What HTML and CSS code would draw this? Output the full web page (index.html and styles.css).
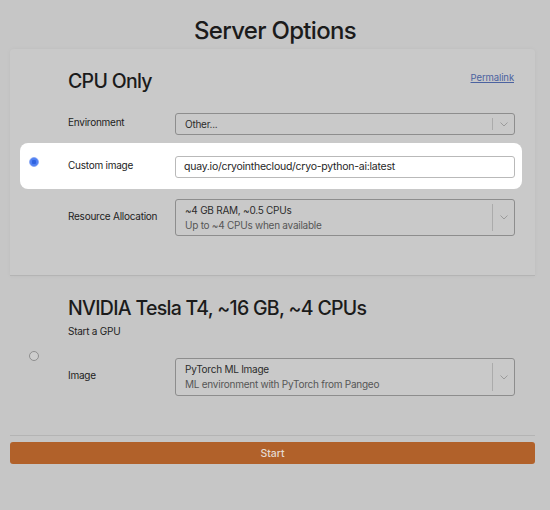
FILE: index.html
```html
<!DOCTYPE html>
<html>
<head>
<meta charset="utf-8">
<link rel="stylesheet" href="styles.css">
</head>
<body>
<h1 class="title">Server Options</h1>
<div class="options">
  <div class="option option-active">
    <div class="radio-col"><span class="radio radio-checked"></span></div>
    <div class="option-body">
      <div class="option-head">
        <h2 class="option-title">CPU Only</h2>
        <a class="permalink" href="#">Permalink</a>
      </div>
      <div class="rows">
        <div class="row">
          <span class="label">Environment</span>
          <div class="select">
            <div class="select-value"><span class="line-main">Other...</span></div>
            <span class="select-sep"></span>
            <span class="select-chev"><svg width="8" height="5" viewBox="0 0 8 5"><polyline points="0.5,0.5 4,4 7.5,0.5" fill="none" stroke="#9b9b9b" stroke-width="1"/></svg></span>
          </div>
        </div>
        <div class="row row-spot">
          <span class="spotlight"></span>
          <span class="label">Custom image</span>
          <div class="text-input">quay.io/cryointhecloud/cryo-python-ai:latest</div>
        </div>
        <div class="row">
          <span class="label">Resource Allocation</span>
          <div class="select select-tall">
            <div class="select-value">
              <span class="line-main">~4 GB RAM, ~0.5 CPUs</span>
              <span class="line-sub">Up to ~4 CPUs when available</span>
            </div>
            <span class="select-sep"></span>
            <span class="select-chev"><svg width="8" height="5" viewBox="0 0 8 5"><polyline points="0.5,0.5 4,4 7.5,0.5" fill="none" stroke="#9b9b9b" stroke-width="1"/></svg></span>
          </div>
        </div>
      </div>
    </div>
  </div>
  <div class="option">
    <div class="radio-col"><span class="radio"></span></div>
    <div class="option-body">
      <div class="option-head">
        <h2 class="option-title">NVIDIA Tesla T4, ~16 GB, ~4 CPUs</h2>
      </div>
      <p class="option-desc">Start a GPU</p>
      <div class="rows">
        <div class="row">
          <span class="label">Image</span>
          <div class="select select-tall select-tall2">
            <div class="select-value">
              <span class="line-main">PyTorch ML Image</span>
              <span class="line-sub">ML environment with PyTorch from Pangeo</span>
            </div>
            <span class="select-sep"></span>
            <span class="select-chev"><svg width="8" height="5" viewBox="0 0 8 5"><polyline points="0.5,0.5 4,4 7.5,0.5" fill="none" stroke="#9b9b9b" stroke-width="1"/></svg></span>
          </div>
        </div>
      </div>
    </div>
  </div>
  <button class="start-btn">Start</button>
</div>
</body>
</html>
```
FILE: styles.css
```css
* { box-sizing: border-box; }
html, body {
  margin: 0;
  padding: 0;
  background: #c6c6c6;
  font-family: Inter, "Noto Sans", "Liberation Sans", sans-serif;
  color: #222;
}
.title {
  margin: 0;
  padding-top: 16px;
  height: 49px;
  font-size: 24px;
  line-height: 30px;
  font-weight: 500;
  text-align: center;
  color: #1b1b1b;
  letter-spacing: -0.7px;
}
.options {
  margin: 0 15px 0 10px;
}
.option {
  display: flex;
  border-bottom: 1px solid #b4b4b4;
}
.option-active {
  background: #c9c9c9;
  border-radius: 4px 4px 0 0;
  box-shadow: 0 0 5px rgba(0,0,0,0.04);
}
.radio-col {
  width: 58px;
  flex: none;
  display: flex;
  align-items: center;
  padding-left: 19px;
}
.radio {
  position: relative;
  z-index: 1;
  width: 10px;
  height: 10px;
  border-radius: 50%;
  border: 1px solid #8f8f8f;
  background: #cdcdcd;
  display: block;
}
.radio-checked {
  border: 1px solid #8aa8f5;
  background: radial-gradient(circle, #2f63e0 0 2px, #4f80f2 2.5px);
}
.option-body {
  flex: 1;
  padding: 20px 20px 39px 0;
}
.option-head {
  display: flex;
  justify-content: space-between;
  align-items: flex-start;
  height: 24px;
  margin-bottom: 20px;
}
.option-title {
  margin: 0;
  font-size: 19.5px;
  line-height: 24px;
  font-weight: 500;
  color: #1b1b1b;
  letter-spacing: -0.7px;
}
.permalink {
  font-size: 9.5px;
  line-height: 16px;
  color: #4b62a0;
  text-decoration: underline;
  letter-spacing: -0.1px;
  margin-top: 1px;
  margin-right: 1px;
}
.option-desc {
  margin: -16px 0 20px;
  font-size: 10px;
  line-height: 14px;
  letter-spacing: -0.25px;
  color: #222;
}
.rows {
  display: flex;
  flex-direction: column;
  gap: 21px;
}
.row {
  position: relative;
  display: flex;
  align-items: center;
}
.label {
  position: relative;
  z-index: 1;
  width: 107px;
  flex: none;
  font-size: 10px;
  line-height: 14px;
  letter-spacing: -0.25px;
  padding-bottom: 4px;
  color: #222;
}
.spotlight {
  position: absolute;
  left: -48px;
  right: -7px;
  top: -13px;
  bottom: -11px;
  background: #fff;
  border-radius: 8px;
  z-index: 0;
}
.select {
  position: relative;
  z-index: 1;
  flex: 1;
  height: 22px;
  display: flex;
  align-items: center;
  border: 1px solid #8d8d8d;
  border-radius: 3px;
  background: #c9c9c9;
}
.select-tall { height: 37px; }
.select-tall2 { height: 38px; }
.select-value {
  flex: 1;
  display: flex;
  flex-direction: column;
  padding-left: 9px;
  font-size: 10px;
  line-height: 15px;
  letter-spacing: -0.25px;
}
.line-main { color: #2c2c2c; }
.line-sub { color: #565656; }
.select-sep {
  width: 1px;
  align-self: stretch;
  margin: 4px 0;
  background: #ababab;
}
.select-chev {
  width: 21px;
  display: flex;
  justify-content: center;
  align-items: center;
}
.select-chev svg { display: block; }
.text-input {
  position: relative;
  z-index: 1;
  flex: 1;
  height: 22px;
  border: 1px solid #b9b9b9;
  border-radius: 3px;
  background: #fff;
  font-size: 10.5px;
  line-height: 20px;
  letter-spacing: -0.25px;
  padding-left: 8px;
  color: #1f1f1f;
}
.start-btn {
  display: block;
  width: 100%;
  height: 22px;
  margin-top: 6px;
  border: none;
  border-radius: 3px;
  background: #b1612a;
  color: #e4dad2;
  font-family: Inter, "Noto Sans", "Liberation Sans", sans-serif;
  font-size: 10.5px;
  font-weight: 500;
  padding: 0;
}
```
